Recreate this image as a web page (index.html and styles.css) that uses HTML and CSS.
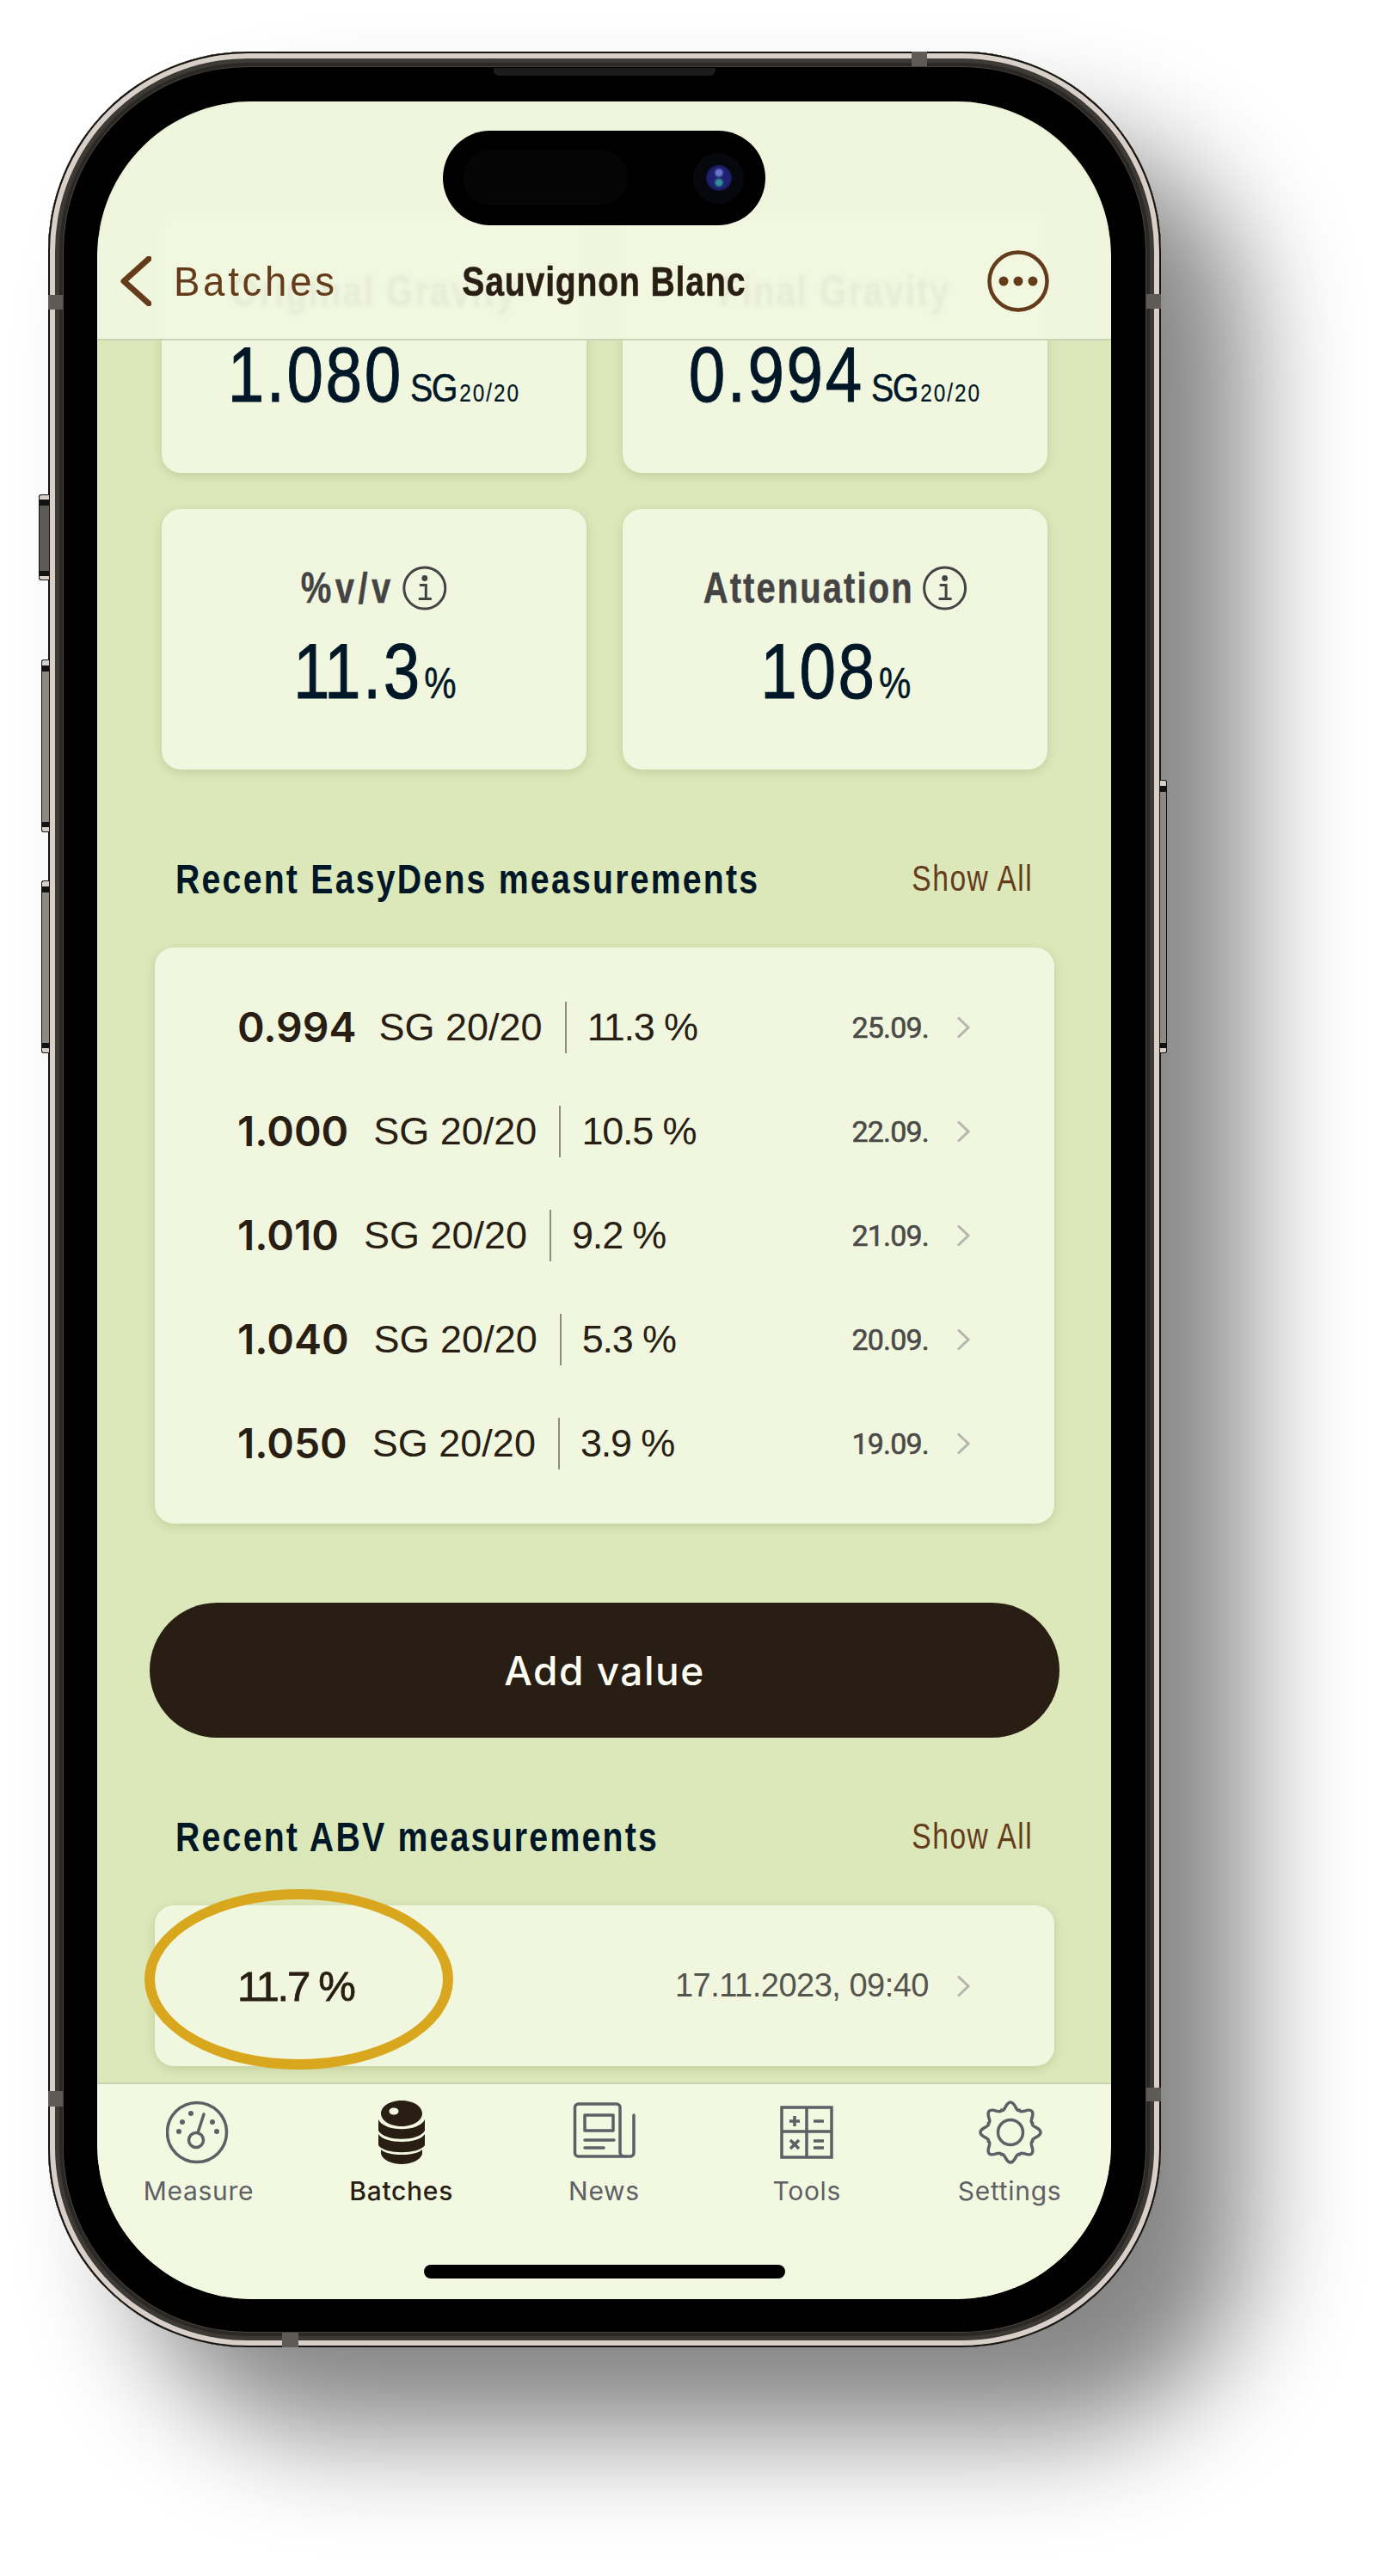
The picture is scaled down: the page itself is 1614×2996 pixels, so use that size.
FILE: index.html
```html
<!DOCTYPE html>
<html lang="en">
<head>
<meta charset="utf-8">
<title>Sauvignon Blanc</title>
<link rel="stylesheet" href="styles.css">
</head>
<body>
<div class="phone">
  <i class="hw mute"></i><i class="hw vol vol-up"></i><i class="hw vol vol-down"></i><i class="hw power"></i>
  <i class="band band-lt"></i><i class="band band-rt"></i><i class="band band-lb"></i><i class="band band-rb"></i>
  <i class="band band-top"></i><i class="band band-bottom"></i>
  <i class="speaker"></i>
  <div class="screen">
    <div class="island"><i class="island-sensor"></i><i class="island-cam"><i class="island-lens"></i></i></div>
    <header class="nav">
      <div class="nav-back">
        <svg class="nav-chevron" viewBox="0 0 36 58"><path d="M33 3 L4 29 L33 55"/></svg>
        <span>Batches</span>
      </div>
      <div class="nav-title">Sauvignon Blanc</div>
      <div class="nav-right">
        <svg class="nav-more" viewBox="0 0 72 72"><circle class="more-ring" cx="36" cy="36" r="33.5"/><circle cx="19" cy="36" r="5.5"/><circle cx="36" cy="36" r="5.5"/><circle cx="53" cy="36" r="5.5"/></svg>
      </div>
    </header>
    <main class="content">
      <section class="stats">
        <div class="stat">
          <div class="stat-label">Original Gravity</div>
          <div class="stat-value">1.080<span class="unit">SG</span><span class="sub">20/20</span></div>
        </div>
        <div class="stat">
          <div class="stat-label">Final Gravity</div>
          <div class="stat-value">0.994<span class="unit">SG</span><span class="sub">20/20</span></div>
        </div>
        <div class="stat">
          <div class="stat-label label-wide">%v/v
            <svg class="info" viewBox="0 0 52 52" preserveAspectRatio="none"><circle class="info-ring" cx="26" cy="26" r="24"/><circle class="info-dot" cx="26" cy="14.5" r="3.4"/><path class="info-i" d="M20 22.5h7.5V38M19 38.5h15"/></svg>
          </div>
          <div class="stat-value"><span class="kern-big">1</span>1.3<span class="unit pct">%</span></div>
        </div>
        <div class="stat">
          <div class="stat-label">Attenuation
            <svg class="info" viewBox="0 0 52 52" preserveAspectRatio="none"><circle class="info-ring" cx="26" cy="26" r="24"/><circle class="info-dot" cx="26" cy="14.5" r="3.4"/><path class="info-i" d="M20 22.5h7.5V38M19 38.5h15"/></svg>
          </div>
          <div class="stat-value">108<span class="unit pct">%</span></div>
        </div>
      </section>

      <div class="section-head first-head">
        <h2>Recent EasyDens measurements</h2>
        <a>Show All</a>
      </div>
      <section class="list">
        <div class="row"><b class="num">0.994</b><span class="sg sg-tight">SG 20/20</span><i class="sep"></i><span class="abv"><span class="kern-small">1</span>1.3 %</span><span class="date">25.09.</span><svg class="chev" viewBox="0 0 16 26"><path d="M2 1.5 L14 13 L2 24.5"/></svg></div>
        <div class="row"><b class="num">1.000</b><span class="sg">SG 20/20</span><i class="sep"></i><span class="abv">10.5 %</span><span class="date">22.09.</span><svg class="chev" viewBox="0 0 16 26"><path d="M2 1.5 L14 13 L2 24.5"/></svg></div>
        <div class="row"><b class="num">1.010</b><span class="sg">SG 20/20</span><i class="sep"></i><span class="abv">9.2 %</span><span class="date">21.09.</span><svg class="chev" viewBox="0 0 16 26"><path d="M2 1.5 L14 13 L2 24.5"/></svg></div>
        <div class="row"><b class="num">1.040</b><span class="sg">SG 20/20</span><i class="sep"></i><span class="abv">5.3 %</span><span class="date">20.09.</span><svg class="chev" viewBox="0 0 16 26"><path d="M2 1.5 L14 13 L2 24.5"/></svg></div>
        <div class="row"><b class="num">1.050</b><span class="sg">SG 20/20</span><i class="sep"></i><span class="abv">3.9 %</span><span class="date">19.09.</span><svg class="chev" viewBox="0 0 16 26"><path d="M2 1.5 L14 13 L2 24.5"/></svg></div>
      </section>

      <button class="add">Add value</button>

      <div class="section-head second-head">
        <h2>Recent ABV measurements</h2>
        <a>Show All</a>
      </div>
      <section class="abv-card">
        <span class="abv-value">11.7 %</span>
        <span class="abv-date">17.11.2023, 09:40</span>
        <svg class="chev" viewBox="0 0 16 26"><path d="M2 1.5 L14 13 L2 24.5"/></svg>
        <i class="highlight"></i>
      </section>
    </main>
    <nav class="tabs">
      <div class="tab">
        <svg class="tab-icon" viewBox="2 0 76 74"><g class="line"><circle cx="38" cy="37" r="34.5"/><circle cx="37" cy="46" r="8.5"/><path d="M39 37.5 L46 16"/></g><g class="fill"><circle cx="31" cy="15" r="3"/><circle cx="21" cy="25" r="3"/><circle cx="17" cy="36" r="3"/><circle cx="56" cy="25" r="3"/><circle cx="61" cy="36" r="3"/></g></svg>
        <span>Measure</span>
      </div>
      <div class="tab tab-active">
        <svg class="tab-icon" viewBox="0 0 56 74"><path fill-rule="evenodd" d="M28 0C41 0 52 6.5 52 15S41 30 28 30 4 23.5 4 15 15 0 28 0ZM19 8.5c-3 0-5.5 1.5-5.5 4s2.5 4 5.5 4 5.5-1.500 5.5-4-2.500-4-5.500-4Z"/><path d="M1 22C8 37 48 37 55 22V35C48 48 8 48 1 35Z"/><path d="M1 39C8 51 48 51 55 39V52C48 63 8 63 1 52Z"/><path d="M4 57C12 65 44 65 52 57V62C50 70 38 74 28 74S6 70 4 62Z"/></svg>
        <span>Batches</span>
      </div>
      <div class="tab">
        <svg class="tab-icon" viewBox="0 0 76 74"><g class="line"><path d="M8.5 65H62a5 5 0 0 1-5-5V8a4 4 0 0 0-4-4H8.5a4 4 0 0 0-4 4v53a4 4 0 0 0 4 4Z"/><path d="M62 65h7a4 4 0 0 0 4-4V17"/><rect x="16" y="17" width="33" height="18"/><path d="M16 46h34M16 55h22"/></g></svg>
        <span>News</span>
      </div>
      <div class="tab">
        <svg class="tab-icon" viewBox="0 0 76 74"><g class="line tools"><rect x="9" y="8" width="58" height="58"/><path d="M38 8v58M9 36h58"/><path d="M18 24h12M24 18v12M46 24h12M19 46l10 10M29 46l-10 10M46 47h12M46 55h12"/></g></svg>
        <span>Tools</span>
      </div>
      <div class="tab">
        <svg class="tab-icon" viewBox="-39 -37 76 74"><g class="line"><circle r="14.5"/><path id="tooth" d="M-10.6 -25.6C-6 -23.5 -6 -35 0 -35S6 -23.5 10.6 -25.6"/><use href="#tooth" transform="rotate(45)"/><use href="#tooth" transform="rotate(90)"/><use href="#tooth" transform="rotate(135)"/><use href="#tooth" transform="rotate(180)"/><use href="#tooth" transform="rotate(225)"/><use href="#tooth" transform="rotate(270)"/><use href="#tooth" transform="rotate(315)"/></g></svg>
        <span>Settings</span>
      </div>
    </nav>
    <i class="home"></i>
  </div>
</div>
</body>
</html>
```

FILE: styles.css
```css
* { box-sizing: border-box; }
html, body { margin: 0; height: 100%; }
body {
  background: #fff;
  padding: 60px 0 0 56px;
  overflow: hidden;
  font-family: "Liberation Sans", Arial, sans-serif;
}
i { display: block; font-style: normal; }

/* device */
.phone {
  position: relative;
  width: 1294px;
  height: 2670px;
  padding: 58px 58px 56px 57px;
  background: #000;
  border-radius: 232px;
  box-shadow:
    inset 0 0 0 2px #15130f,
    inset 0 0 0 8px #d8cfc9,
    inset 0 0 0 13px #3d3935,
    inset 0 0 0 17px #2b2825,
    inset 0 0 0 18px #46423e,
    100px 100px 130px rgba(0, 0, 0, .48);
}
.hw {
  position: absolute;
  border: 1.5px solid #111;
  border-right: 0;
  border-radius: 3px 0 0 3px;
}
.mute {
  left: -11px; top: 515px; width: 12px; height: 100px;
  background: linear-gradient(#d8cfc9 0 5px, #111 5px 12px, #5c5a55 12px 88px, #111 88px 94px, #d8cfc9 94px);
}
.vol {
  left: -8px; width: 9px; height: 201px;
  background: linear-gradient(#d8cfc9 0 6px, #111 6px 13px, #8d8880 13px 188px, #111 188px 194px, #d8cfc9 194px);
}
.vol-up { top: 707px; }
.vol-down { top: 964px; }
.power {
  right: -7px; top: 847px; width: 8px; height: 318px;
  border: 1.5px solid #111; border-left: 0;
  border-radius: 0 3px 3px 0;
  background: linear-gradient(#d8cfc9 0 6px, #111 6px 13px, #8d8880 13px 305px, #111 305px 311px, #d8cfc9 311px);
}
.band { position: absolute; background: #5e5a56; }
.band-lt { left: 0; top: 283px; width: 17px; height: 17px; }
.band-rt { right: 0; top: 282px; width: 17px; height: 17px; }
.band-lb { left: 0; top: 2372px; width: 17px; height: 18px; }
.band-rb { right: 0; top: 2368px; width: 17px; height: 16px; }
.band-top { left: 1004px; top: 0; width: 18px; height: 17px; }
.band-bottom { left: 272px; bottom: 0; width: 19px; height: 17px; }
.speaker {
  position: absolute; left: 518px; top: 19px; width: 258px; height: 9px;
  background: #1c1c1c; border-radius: 0 0 6px 6px;
}

/* screen */
.screen {
  position: relative;
  display: flex;
  flex-direction: column;
  width: 1179px;
  height: 2556px;
  background: #dde8ba;
  border-radius: 180px;
  overflow: hidden;
}
.island {
  position: absolute; z-index: 5; left: 402px; top: 34px;
  width: 375px; height: 110px;
  background: #000; border-radius: 55px;
}
.island-sensor {
  position: absolute; left: 23px; top: 22px; width: 192px; height: 65px;
  background: #050505; border-radius: 33px;
}
.island-cam {
  position: absolute; left: 291px; top: 26px; width: 59px; height: 59px;
  background: #07070e; border-radius: 50%;
}
.island-lens {
  position: absolute; left: 15px; top: 14px; width: 30px; height: 30px; border-radius: 50%;
  background: radial-gradient(circle at 50% 30%, #6a75c9 0 3px, transparent 6px),
              radial-gradient(circle at 50% 68%, #2f8f9a 0 3px, transparent 6px),
              radial-gradient(circle, #1e2270 0 55%, #0c0d2c 100%);
}

/* nav bar */
.nav {
  position: absolute; z-index: 4; left: 0; right: 0; top: 0;
  display: grid;
  grid-template-columns: 1fr auto 1fr;
  align-items: center;
  height: 278px;
  padding: 142px 72px 0;
  background: rgba(241, 246, 223, .94);
  border-bottom: 2px solid #ccd3b4;
  backdrop-filter: blur(2px);
}
.nav-back {
  display: flex; align-items: center; gap: 26px;
  margin-left: -45px;
  font-size: 49px; letter-spacing: 4px; color: #643c1c;
}
.nav-back span { transform: scaleX(.93); transform-origin: left center; }
.nav-chevron { width: 36px; height: 58px; fill: none; stroke: #643c1c; stroke-width: 7px; stroke-linecap: round; stroke-linejoin: round; }
.nav-title {
  font-weight: 700; font-size: 49px; letter-spacing: 1px; color: #281e13;
  -webkit-text-stroke: .5px #281e13;
  transform: scaleX(.8);
}
.nav-right { display: flex; justify-content: flex-end; }
.nav-more { width: 72px; height: 72px; fill: #643c1c; }
.more-ring { fill: none; stroke: #643c1c; stroke-width: 4.5px; }

/* main scroll content */
.content { flex: 1; min-height: 0; padding-top: 129px; overflow: hidden; }
.stats {
  display: grid;
  grid-template-columns: 494px 494px;
  grid-auto-rows: 303px;
  gap: 42px;
  margin-left: 75px;
}
.stat {
  padding-top: 62px;
  background: #f1f6df;
  border-radius: 22px;
  box-shadow: 0 3px 12px rgba(100, 110, 50, .22);
  text-align: center;
}
.stat-label {
  display: flex; justify-content: center; align-items: center; gap: 12px;
  height: 60px;
  font-weight: 700; font-size: 50px; letter-spacing: 2.6px; color: #444;
  -webkit-text-stroke: .4px #444;
  transform: scaleX(.8);
}
.label-wide { letter-spacing: 5.5px; }
.info { width: 65px; height: 52px; flex: none; }
.info-ring { fill: none; stroke: #444; stroke-width: 3px; }
.info-dot { fill: #444; }
.info-i { fill: none; stroke: #444; stroke-width: 3px; }
.stat-value {
  margin-top: 17px;
  height: 100px;
  font-size: 91px; line-height: 100px; letter-spacing: 3px; color: #001727;
  -webkit-text-stroke: 1px #001727;
  white-space: nowrap;
  transform: scaleX(.84);
}
.kern-big { letter-spacing: -8px; }
.unit { margin-left: 10px; font-size: 47px; letter-spacing: -2px; -webkit-text-stroke: .5px #001727; }
.pct { font-size: 50px; margin-left: 3px; }
.sub { margin-left: 4px; font-size: 29px; letter-spacing: 2.4px; -webkit-text-stroke: .2px #001727; }

.section-head {
  display: flex; justify-content: space-between; align-items: center;
  height: 50px;
  padding: 0 91px;
  white-space: nowrap;
}
.section-head h2 {
  flex: 1; min-width: 0;
  margin: 0; font-size: 49px; font-weight: 700; letter-spacing: 2.8px; color: #001727;
  transform: scaleX(.8); transform-origin: left center;
}
.section-head a {
  flex: none;
  font-size: 42px; letter-spacing: 1.9px; color: #643c1c;
  transform: scaleX(.8); transform-origin: right center;
}
.first-head { margin-top: 102px; }
.second-head { margin-top: 90px; }

.list, .abv-card {
  background: #f1f6df;
  border-radius: 22px;
  box-shadow: 0 3px 12px rgba(100, 110, 50, .22);
  margin: 55px 66px 0 67px;
}
.list { padding: 32px 98px 33px 96px; }
.row { display: flex; align-items: center; height: 121px; color: #281e13; }
.num { font-family: Inter, sans-serif; font-weight: 600; font-size: 48px; }
.sg { margin-left: 29px; font-size: 45px; }
.sg-tight { margin-left: 26px; }
.sep { width: 2px; height: 60px; margin: 0 24px 0 26px; background: #8c8c80; }
.abv { font-size: 45px; letter-spacing: -1.2px; }
.kern-small { letter-spacing: -6px; }
.date { margin-left: auto; font-family: Roboto, sans-serif; font-size: 34px; letter-spacing: -.8px; color: #4a4a48; -webkit-text-stroke: .6px #4a4a48; }
.chev { width: 16px; height: 26px; margin-left: 32px; fill: none; stroke: #b5b6ae; stroke-width: 3px; }

.add {
  display: block;
  width: 1058px; height: 157px;
  margin: 92px 0 0 61px;
  border: 0; border-radius: 79px;
  background: #281e13; color: #fbfbf2;
  font-family: Inter, sans-serif; font-weight: 500; font-size: 46px; letter-spacing: 1.5px;
}

.abv-card {
  position: relative;
  display: flex; align-items: center;
  height: 187px;
  margin-top: 55px;
  padding: 0 98px 0 96px;
}
.abv-value { font-size: 49px; letter-spacing: -2.2px; color: #281e13; -webkit-text-stroke: .8px #281e13; }
.abv-date { margin-left: auto; font-size: 38px; letter-spacing: -.5px; color: #55554f; }
.highlight {
  position: absolute; left: -12px; top: -19px;
  width: 359px; height: 210px;
  border: 12px solid #d8a71d;
  border-radius: 50%;
}

/* tab bar */
.tabs {
  flex: none;
  display: grid;
  grid-template-columns: repeat(5, 1fr);
  height: 252px;
  padding-top: 19px;
  background: #f3f8e1;
  border-top: 2px solid #ccd3b4;
}
.tab {
  display: flex; flex-direction: column; align-items: center;
  font-family: Inter, sans-serif; font-size: 30px; line-height: 36px; letter-spacing: .7px; color: #5f5f66;
}
.tab span { margin-top: 13px; }
.tab-active { color: #281e13; font-weight: 500; }
.tab-icon { height: 74px; width: 76px; }
.tab-active .tab-icon { width: 56px; fill: #281e13; }
.line { fill: none; stroke: #5f5f66; stroke-width: 3.5px; stroke-linejoin: round; stroke-linecap: round; }
.tools { stroke-linejoin: miter; stroke-linecap: butt; }
.fill { fill: #5f5f66; }

.home {
  position: absolute; z-index: 3; left: 380px; bottom: 24px;
  width: 420px; height: 16px;
  background: #000; border-radius: 8px;
}
```
